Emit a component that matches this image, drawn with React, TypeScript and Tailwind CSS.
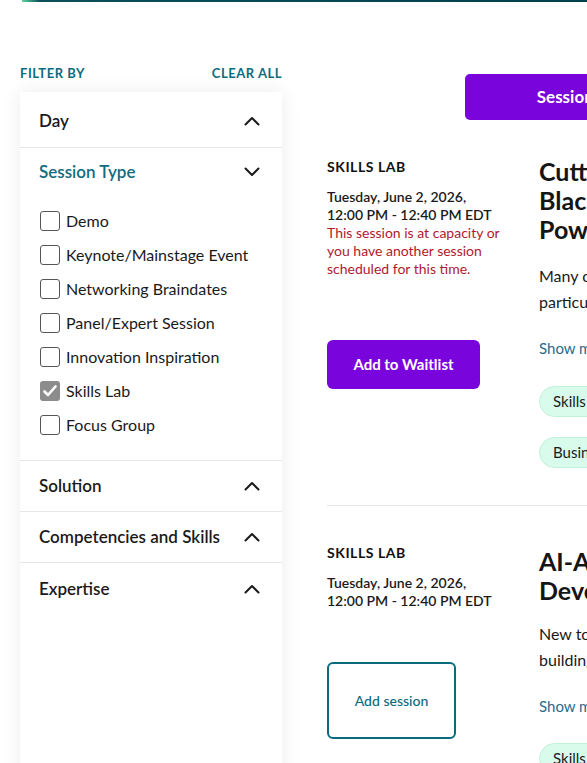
import React from 'react';

const Chevron = ({ up }: { up?: boolean }) => (
  <svg width="16" height="10" viewBox="0 0 16 10" fill="none" stroke="#1a1a1a" strokeWidth="2" className={up ? '' : 'rotate-180'}>
    <polyline points="1.5,8.5 8,2 14.5,8.5" strokeLinecap="round" strokeLinejoin="round" />
  </svg>
);

const sessionTypes = [
  'Demo',
  'Keynote/Mainstage Event',
  'Networking Braindates',
  'Panel/Expert Session',
  'Innovation Inspiration',
  'Skills Lab',
  'Focus Group',
];

const Sidebar = () => {
  return (
    <div className="w-[262px] shrink-0 pt-[62px]">
      {/* Filter header */}
      <div className="flex items-center justify-between h-[20px] mb-[8px] text-[13px] font-bold tracking-[0.04em] text-[#0e6b80]">
        <span>FILTER BY</span>
        <span>CLEAR ALL</span>
      </div>

      <div className="bg-white shadow-[0_0_18px_rgba(0,0,0,0.08)] min-h-[700px]">
        <div className="flex items-center justify-between h-[56px] pt-[3px] pl-[19px] pr-[22px] border-b border-[#e6e6e6]">
          <span className="text-[17px] font-semibold text-[#1a1a1a]">Day</span>
          <Chevron up />
        </div>

        {/* Session Type (open) */}
        <div className="border-b border-[#e6e6e6] pb-[18px]">
          <div className="flex items-center justify-between h-[48px] pl-[19px] pr-[22px]">
            <span className="text-[17px] font-semibold text-[#116b80]">Session Type</span>
            <Chevron />
          </div>
          <div className="mt-[8px] pl-[20px]">
            {sessionTypes.map((t) => {
              const checked = t === 'Skills Lab';
              return (
                <label key={t} className="flex items-center gap-[6px] h-[34px] text-[16px] text-[#1a1a1a]">
                  {checked ? (
                    <span className="w-[20px] h-[20px] rounded-[3px] bg-[#8c8c8c] flex items-center justify-center">
                      <svg width="14" height="12" viewBox="0 0 14 12" fill="none" stroke="white" strokeWidth="2.6">
                        <polyline points="1.5,6.5 5,10 12.5,1.5" strokeLinecap="round" strokeLinejoin="round" />
                      </svg>
                    </span>
                  ) : (
                    <span className="w-[20px] h-[20px] rounded-[3px] border border-[#555] bg-white" />
                  )}
                  <span>{t}</span>
                </label>
              );
            })}
          </div>
        </div>

        {['Solution', 'Competencies and Skills', 'Expertise'].map((s, i) => (
          <div
            key={s}
            className={`flex items-center justify-between h-[51px] pl-[19px] pr-[22px] ${i < 2 ? 'border-b border-[#e6e6e6]' : ''}`}
          >
            <span className="text-[17px] font-semibold text-[#1a1a1a]">{s}</span>
            <Chevron up />
          </div>
        ))}
      </div>
    </div>
  );
};

const Pill = ({ label }: { label: string }) => (
  <span className="inline-flex items-center h-[31px] px-[13px] rounded-full bg-[#d8fbec] border border-[#c0f2da] text-[15px] text-[#1a1a1a] whitespace-nowrap">
    {label}
  </span>
);

const SessionCard = ({
  title,
  desc,
  full,
  pills,
  btnGap,
  titleGap,
  descGap,
  divider,
}: {
  title: string[];
  desc: string[];
  full?: boolean;
  pills: string[];
  btnGap: string;
  titleGap: string;
  descGap: string;
  divider?: boolean;
}) => {
  return (
    <div className={`flex gap-[22px] pt-[37px] pb-[37px] ${divider ? 'border-b border-[#e6e6e6]' : ''}`}>
      {/* Left info */}
      <div className="w-[190px] shrink-0">
        <div className="text-[14px] leading-[20px] font-bold tracking-[0.04em] text-[#111]">SKILLS LAB</div>
        <div className="mt-[11px] text-[14px] leading-[18px] font-semibold text-[#1a1a1a]">
          Tuesday, June 2, 2026,
          <br />
          12:00 PM - 12:40 PM EDT
        </div>
        {full && (
          <div className="text-[14px] leading-[18px] text-[#b0192e]">
            This session is at capacity or
            <br />
            you have another session
            <br />
            scheduled for this time.
          </div>
        )}
        {full ? (
          <button type="button" className={`${btnGap} w-[153px] h-[49px] rounded-[6px] bg-[#7a04dc] text-white text-[15px] font-bold`}>
            Add to Waitlist
          </button>
        ) : (
          <button
            type="button"
            className={`${btnGap} w-[129px] h-[77px] rounded-[6px] border-2 border-[#0b6a7e] bg-white text-[#0b6a7e] text-[14px] font-medium`}
          >
            Add session
          </button>
        )}
      </div>

      {/* Right content */}
      <div className={`w-[420px] shrink-0 ${titleGap}`}>
        <h3 className="text-[25px] leading-[29px] font-bold text-[#151515]">
          {title.map((l, i) => (
            <div key={i} className="whitespace-nowrap">{l}</div>
          ))}
        </h3>
        <div className={`${descGap} text-[16px] leading-[26px] text-[#1a1a1a]`}>
          {desc.map((l, i) => (
            <div key={i} className="whitespace-nowrap">{l}</div>
          ))}
        </div>
        <div className="mt-[22px] text-[15px] text-[#2a6a8c]">Show more</div>
        <div className="mt-[26px] flex flex-col items-start gap-[20px]">
          {pills.map((p) => (
            <Pill key={p} label={p} />
          ))}
        </div>
      </div>
    </div>
  );
};

const App = () => {
  return (
    <div className="w-[587px] h-[763px] overflow-hidden bg-white relative" style={{ fontFamily: 'Lato, "Noto Sans", sans-serif' }}>
      <div className="ml-[22px] h-[2px] bg-[linear-gradient(90deg,#5ad69e_0px,#0b4f5a_18px,#01404c_100%)]" />
      <div className="flex w-[1100px] pl-[20px]">
        <Sidebar />

        <div className="ml-[45px] flex-1">
          <div className="pt-[72px] pl-[138px]">
            <button type="button" className="w-[208px] h-[46px] rounded-[5px] bg-[#7a04dc] text-white text-[17px] font-bold">
              Sessions
            </button>
          </div>

          <SessionCard
            title={['Cutting-Edge Insights:', 'Blackbaud AI Tools That', 'Power Your Mission']}
            desc={['Many organizations are exploring AI, but', 'particular challenges arise when putting it to work.']}
            full
            pills={['Skills Lab', 'Business Intelligence']}
            btnGap="mt-[62px]"
            titleGap=""
            descGap="mt-[19px]"
            divider
          />
          <SessionCard
            title={['AI-Assisted Fundraising', 'Development Workshop']}
            desc={['New to AI? Learn the basics of', 'building prompts for your team.']}
            pills={['Skills Lab']}
            btnGap="mt-[52px]"
            titleGap="pt-[4px]"
            descGap="mt-[16px]"
          />
        </div>
      </div>
    </div>
  );
};

export default App;
